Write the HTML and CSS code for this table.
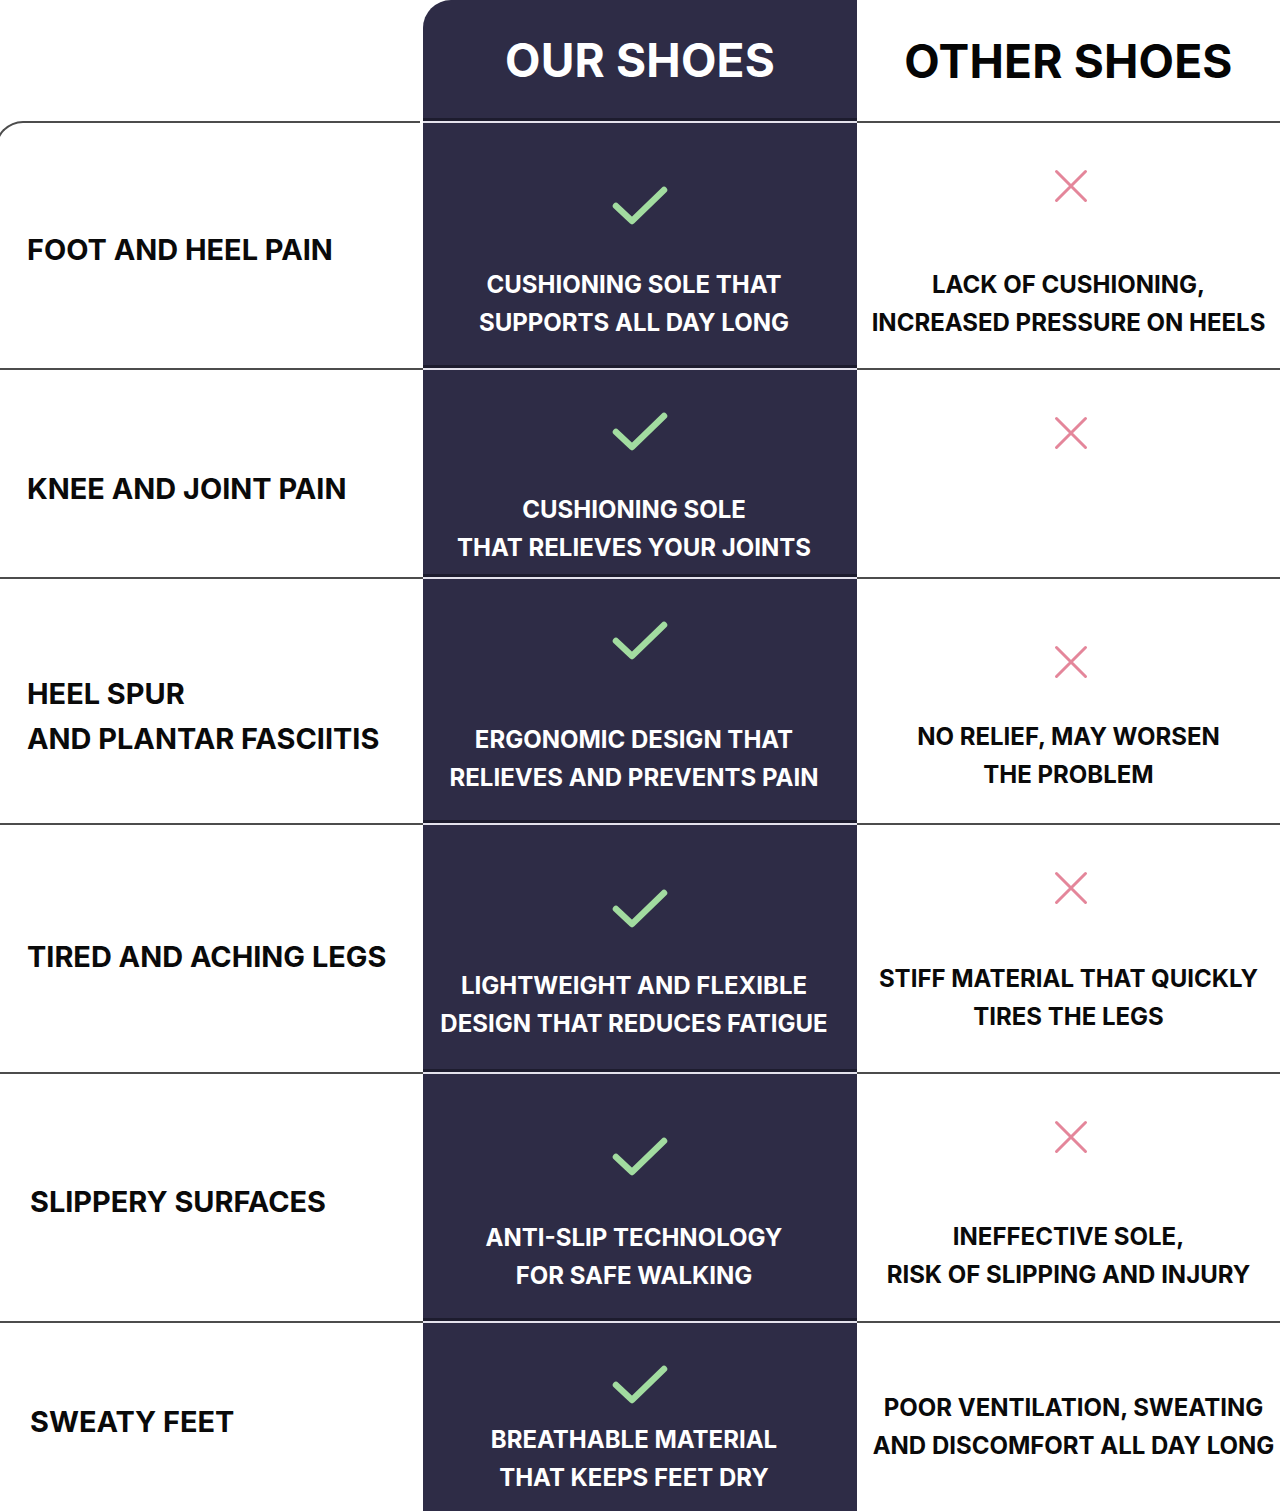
FILE: index.html
```html
<!DOCTYPE html>
<html lang="en">
<head>
<meta charset="utf-8">
<title>Our Shoes vs Other Shoes</title>
<link rel="stylesheet" href="styles.css">
</head>
<body>
<div class="table">
  <div class="head">
    <div class="hcell blank"></div>
    <div class="hcell ours">OUR SHOES</div>
    <div class="hcell other">OTHER SHOES</div>
  </div>

  <div class="row r1">
    <div class="cell left first"><span class="label">FOOT AND HEEL PAIN</span></div>
    <div class="cell mid">
      <svg class="check" width="58" height="42" viewBox="0 0 58 42"><path d="M5 22 L21 37 L53 6"/></svg>
      <p class="mtext">CUSHIONING SOLE THAT<br>SUPPORTS ALL DAY LONG</p>
    </div>
    <div class="cell right">
      <svg class="cross" width="36" height="36" viewBox="0 0 36 36"><path d="M3.5 3.5 L32.5 32.5 M32.5 3.5 L3.5 32.5"/></svg>
      <p class="rtext">LACK OF CUSHIONING,<br>INCREASED PRESSURE ON HEELS</p>
    </div>
  </div>

  <div class="row r2">
    <div class="cell left"><span class="label">KNEE AND JOINT PAIN</span></div>
    <div class="cell mid">
      <svg class="check" width="58" height="42" viewBox="0 0 58 42"><path d="M5 22 L21 37 L53 6"/></svg>
      <p class="mtext">CUSHIONING SOLE<br>THAT RELIEVES YOUR JOINTS</p>
    </div>
    <div class="cell right">
      <svg class="cross" width="36" height="36" viewBox="0 0 36 36"><path d="M3.5 3.5 L32.5 32.5 M32.5 3.5 L3.5 32.5"/></svg>
    </div>
  </div>

  <div class="row r3">
    <div class="cell left"><span class="label">HEEL SPUR<br>AND PLANTAR FASCIITIS</span></div>
    <div class="cell mid">
      <svg class="check" width="58" height="42" viewBox="0 0 58 42"><path d="M5 22 L21 37 L53 6"/></svg>
      <p class="mtext">ERGONOMIC DESIGN THAT<br>RELIEVES AND PREVENTS PAIN</p>
    </div>
    <div class="cell right">
      <svg class="cross" width="36" height="36" viewBox="0 0 36 36"><path d="M3.5 3.5 L32.5 32.5 M32.5 3.5 L3.5 32.5"/></svg>
      <p class="rtext">NO RELIEF, MAY WORSEN<br>THE PROBLEM</p>
    </div>
  </div>

  <div class="row r4">
    <div class="cell left"><span class="label">TIRED AND ACHING LEGS</span></div>
    <div class="cell mid">
      <svg class="check" width="58" height="42" viewBox="0 0 58 42"><path d="M5 22 L21 37 L53 6"/></svg>
      <p class="mtext">LIGHTWEIGHT AND FLEXIBLE<br>DESIGN THAT REDUCES FATIGUE</p>
    </div>
    <div class="cell right">
      <svg class="cross" width="36" height="36" viewBox="0 0 36 36"><path d="M3.5 3.5 L32.5 32.5 M32.5 3.5 L3.5 32.5"/></svg>
      <p class="rtext">STIFF MATERIAL THAT QUICKLY<br>TIRES THE LEGS</p>
    </div>
  </div>

  <div class="row r5">
    <div class="cell left"><span class="label shift">SLIPPERY SURFACES</span></div>
    <div class="cell mid">
      <svg class="check" width="58" height="42" viewBox="0 0 58 42"><path d="M5 22 L21 37 L53 6"/></svg>
      <p class="mtext">ANTI-SLIP TECHNOLOGY<br>FOR SAFE WALKING</p>
    </div>
    <div class="cell right">
      <svg class="cross" width="36" height="36" viewBox="0 0 36 36"><path d="M3.5 3.5 L32.5 32.5 M32.5 3.5 L3.5 32.5"/></svg>
      <p class="rtext">INEFFECTIVE SOLE,<br>RISK OF SLIPPING AND INJURY</p>
    </div>
  </div>

  <div class="row r6">
    <div class="cell left"><span class="label shift">SWEATY FEET</span></div>
    <div class="cell mid">
      <svg class="check" width="58" height="42" viewBox="0 0 58 42"><path d="M5 22 L21 37 L53 6"/></svg>
      <p class="mtext">BREATHABLE MATERIAL<br>THAT KEEPS FEET DRY</p>
    </div>
    <div class="cell right">
      <p class="rtext wide">POOR VENTILATION, SWEATING<br>AND DISCOMFORT ALL DAY LONG</p>
    </div>
  </div>
</div>
</body>
</html>
```

FILE: styles.css
```css
* { box-sizing: border-box; }

html, body {
  margin: 0;
  padding: 0;
  background: #ffffff;
}

body {
  width: 1280px;
  height: 1511px;
  overflow: hidden;
  font-family: Inter, "Noto Sans", "Liberation Sans", sans-serif;
  font-weight: 700;
  color: #0a0a0a;
}

.table {
  display: flex;
  flex-direction: column;
}

.head,
.row {
  display: grid;
  grid-template-columns: 423px 434px 423px;
}

.head { height: 121px; }

.hcell {
  display: flex;
  align-items: center;
  justify-content: center;
  font-size: 46px;
  letter-spacing: 0.2px;
  line-height: 1;
}

.hcell.ours {
  background: #2e2c46;
  color: #ffffff;
  border-top-left-radius: 28px;
  padding-bottom: 2px;
}

.hcell.other {
  color: #050505;
}

.cell {
  display: flex;
  flex-direction: column;
  border-top: 2px solid #4c4c4c;
}

.cell.left {
  padding-left: 27px;
  padding-top: var(--lt);
}

.cell.left.first {
  position: relative;
  border-top: none;
}

.cell.left.first::before {
  content: "";
  position: absolute;
  left: -5px;
  top: 0;
  width: 100%;
  height: 60px;
  border-top: 2px solid #4c4c4c;
  border-left: 2px solid #4c4c4c;
  border-top-left-radius: 28px;
  pointer-events: none;
}

.label {
  font-size: 28.9px;
  line-height: 45px;
  letter-spacing: 0;
}

.label.shift { margin-left: 3px; }

.cell.mid {
  background: #2e2c46;
  color: #ffffff;
  align-items: center;
  border-top: 2px solid #e4e2ec;
  box-shadow: 0 -3px 0 #1d1c2e;
  padding-top: var(--ct);
}

.check {
  display: block;
  fill: none;
  stroke: #a2dca0;
  stroke-width: 6.5;
  stroke-linecap: round;
  stroke-linejoin: round;
}

.mtext,
.rtext {
  margin: 0;
  font-size: 24px;
  line-height: 38px;
  text-align: center;
  white-space: nowrap;
}

.mtext {
  margin-top: calc(var(--mt) - var(--ct) - 42px);
  margin-right: 12px;
}

.cell.right {
  align-items: center;
  padding-top: var(--xt);
}

.cross {
  display: block;
  fill: none;
  stroke: #e4869a;
  stroke-width: 3;
  stroke-linecap: round;
  margin-left: 5px;
}

.rtext {
  margin-top: calc(var(--rt) - var(--xt) - 36px);
  color: #0a0a0a;
}

.rtext.wide { margin-left: 10px; }

.r1 { height: 247px; --lt: 106px; --ct: 61px; --mt: 143px; --xt: 45px; --rt: 143px; }
.r2 { height: 209px; --lt: 96px; --ct: 40px; --mt: 121px; --xt: 45px; --rt: 121px; }
.r3 { height: 246px; --lt: 92px; --ct: 40px; --mt: 142px; --xt: 65px; --rt: 139px; }
.r4 { height: 249px; --lt: 109px; --ct: 62px; --mt: 142px; --xt: 45px; --rt: 135px; }
.r5 { height: 249px; --lt: 105px; --ct: 61px; --mt: 145px; --xt: 45px; --rt: 144px; }
.r6 { height: 190px; --lt: 76px; --ct: 40px; --mt: 98px; --xt: 66px; --rt: 66px; }

.r6 .rtext { margin-top: 0; }
```
